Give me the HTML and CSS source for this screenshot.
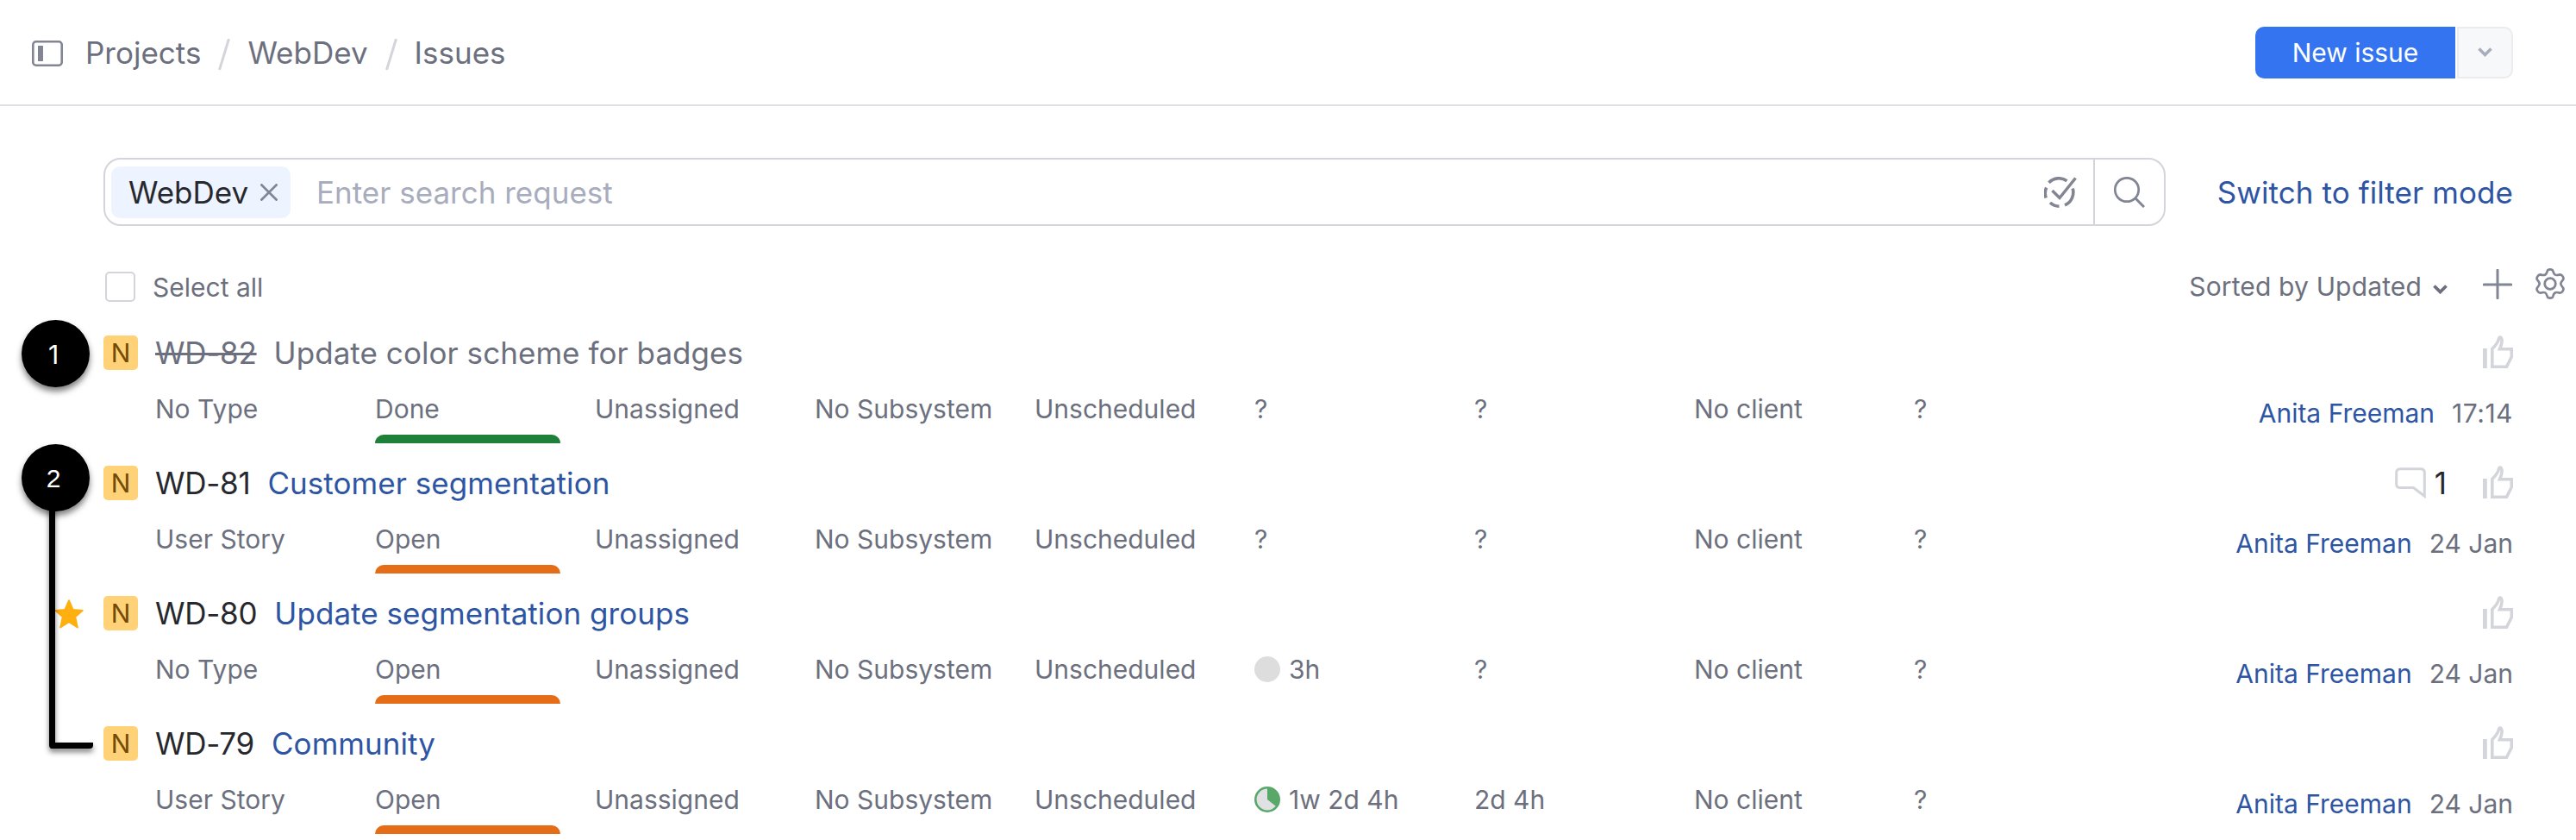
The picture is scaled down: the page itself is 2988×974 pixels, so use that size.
FILE: index.html
```html
<!DOCTYPE html>
<html lang="en">
<head>
    <meta charset="UTF-8">
    <meta name="viewport" content="width=device-width, initial-scale=1.0">
    <title>Issues</title>
    <link rel="stylesheet" href="styles.css">
</head>
<body>

    <!-- Shared icons -->
    <svg class="sprite">
        <symbol id="thumb" viewBox="0 0 35 38">
            <path d="M10.800 15.500v20.700h16.700l5.800-11.500v-9H19.500c2.500-5.500 3.500-10.500 1.500-13.200-.8-.9-1.800-.6-2.300.5-.8 4-3.400 8.200-7.900 12.500z" fill="none" stroke="currentColor" stroke-width="3.600"/>
            <path d="M0 15h4.800v23H0z" fill="currentColor"/>
        </symbol>
        <symbol id="slash" viewBox="0 0 14 36">
            <path d="M12.500 0L1.500 36" stroke="currentColor" stroke-width="3"/>
        </symbol>
    </svg>

    <header class="header">
        <svg class="sidebar-icon" viewBox="0 0 36 30">
            <rect x="1.300" y="1.300" width="33.400" height="27.400" rx="3.500" fill="none" stroke="currentColor" stroke-width="2.600"/>
            <path d="M7 6h6v18H7z" fill="currentColor"/>
        </svg>
        <nav class="crumbs">
            <a>Projects</a>
            <svg class="slash"><use href="#slash"/></svg>
            <a>WebDev</a>
            <svg class="slash"><use href="#slash"/></svg>
            <a>Issues</a>
        </nav>
        <button class="new-issue">New issue</button>
        <button class="new-more">
            <svg class="arrow" viewBox="0 0 17 11"><path d="M1.500 1.500l7 7 7-7" fill="none" stroke="currentColor" stroke-width="3.500"/></svg>
        </button>
    </header>

    <main>
        <div class="search-row">
            <div class="search">
                <span class="chip">WebDev
                    <svg class="close" viewBox="0 0 20 20"><path d="M.5.5l19 19M19.500.5l-19 19" stroke="currentColor" stroke-width="2.700"/></svg>
                </span>
                <span class="placeholder">Enter search request</span>
                <svg class="check-icon" viewBox="0 0 38 36">
                    <path d="M5.500 6.800A16 16 0 0 1 26.500 4.800M33.200 13.500A16 16 0 0 1 24 32.800M17.500 34.200A16 16 0 0 1 7 30M2.200 24.500A16 16 0 0 1 2.700 12.500" fill="none" stroke="currentColor" stroke-width="3.600"/>
                    <path d="M9.500 16l8.500 8.500L36.500 1.500" fill="none" stroke="currentColor" stroke-width="3.500"/>
                </svg>
                <span class="search-btn">
                    <svg viewBox="0 0 36 36"><circle cx="15" cy="15" r="13.700" fill="none" stroke="currentColor" stroke-width="2.700"/><path d="M24.500 24.500L35 35" stroke="currentColor" stroke-width="3"/></svg>
                </span>
            </div>
            <a class="filter-link">Switch to filter mode</a>
        </div>

        <div class="toolbar">
            <span class="checkbox"></span>
            <span class="select-all">Select all</span>
            <span class="sorted">Sorted by Updated</span>
            <svg class="arrow" viewBox="0 0 17 11"><path d="M1.500 1.500l7 7 7-7" fill="none" stroke="currentColor" stroke-width="3.800"/></svg>
            <svg class="plus" viewBox="0 0 34 35"><path d="M17 1.300v32.400M1.300 18h31.400" stroke="currentColor" stroke-width="3" stroke-linecap="round"/></svg>
            <svg class="gear" viewBox="0 0 36 36">
                <path d="M14.800 3.200Q15.300 1.400 18 1.400T21.200 3.200Q22.200 6.500 23.600 7.500T29.300 7.400Q31.300 7.200 32.700 9.600T32.900 13.300Q30.300 16.500 30.300 18T32.900 22.700Q34.100 24 32.700 26.400T29.300 28.600Q25.200 27.500 23.600 28.500T21.200 32.800Q20.700 34.600 18 34.600T14.800 32.800Q13.800 29.500 12.400 28.500T6.700 28.600Q4.700 28.800 3.300 26.400T3.100 22.700Q5.700 19.500 5.700 18T3.100 13.300Q1.900 12 3.300 9.600T6.700 7.400Q10.800 8.500 12.400 7.500T14.800 3.200Z" fill="none" stroke="currentColor" stroke-width="2.700" stroke-linejoin="round"/>
                <circle cx="18" cy="18" r="6.300" fill="none" stroke="currentColor" stroke-width="2.800"/>
            </svg>
        </div>

        <div class="issue resolved">
            <div class="summary">
                <span class="tag">N</span>
                <span class="issue-id">WD-82</span>
                <a class="title">Update color scheme for badges</a>
                <svg class="thumb"><use href="#thumb"/></svg>
            </div>
            <div class="fields">
                <span>No Type</span>
                <span class="state done">Done</span>
                <span>Unassigned</span>
                <span>No Subsystem</span>
                <span>Unscheduled</span>
                <span>?</span>
                <span>?</span>
                <span>No client</span>
                <span>?</span>
                <div class="updated"><a>Anita Freeman</a><time class="today">17:14</time></div>
            </div>
        </div>

        <div class="issue">
            <div class="summary">
                <span class="tag">N</span>
                <span class="issue-id">WD-81</span>
                <a class="title">Customer segmentation</a>
                <svg class="comment" viewBox="0 0 36 36"><path d="M6 1.700h24q4.300 0 4.300 4.300v27.300L21.500 23.500H6q-4.300 0-4.300-4.300V6q0-4.300 4.300-4.300z" fill="none" stroke="currentColor" stroke-width="3"/></svg>
                <span class="comment-count">1</span>
                <svg class="thumb"><use href="#thumb"/></svg>
            </div>
            <div class="fields">
                <span>User Story</span>
                <span class="state open">Open</span>
                <span>Unassigned</span>
                <span>No Subsystem</span>
                <span>Unscheduled</span>
                <span>?</span>
                <span>?</span>
                <span>No client</span>
                <span>?</span>
                <div class="updated"><a>Anita Freeman</a><time>24 Jan</time></div>
            </div>
        </div>

        <div class="issue">
            <div class="summary">
                <svg class="star" viewBox="0 0 34 34"><path d="M17 1.200l4.600 10.600 11.200 1-8.500 7.500 2.600 12.300L17 26.200 7.100 32.600l2.600-12.300-8.500-7.500 11.200-1z" fill="currentColor" stroke="currentColor" stroke-width="1.800" stroke-linejoin="round"/></svg>
                <span class="tag">N</span>
                <span class="issue-id">WD-80</span>
                <a class="title">Update segmentation groups</a>
                <svg class="thumb"><use href="#thumb"/></svg>
            </div>
            <div class="fields">
                <span>No Type</span>
                <span class="state open">Open</span>
                <span>Unassigned</span>
                <span>No Subsystem</span>
                <span>Unscheduled</span>
                <span class="period"><svg viewBox="0 0 30 30"><circle cx="15" cy="15" r="15" fill="#ddd"/></svg>3h</span>
                <span>?</span>
                <span>No client</span>
                <span>?</span>
                <div class="updated"><a>Anita Freeman</a><time>24 Jan</time></div>
            </div>
        </div>

        <div class="issue">
            <div class="summary">
                <span class="tag">N</span>
                <span class="issue-id">WD-79</span>
                <a class="title">Community</a>
                <svg class="thumb"><use href="#thumb"/></svg>
            </div>
            <div class="fields">
                <span>User Story</span>
                <span class="state open">Open</span>
                <span>Unassigned</span>
                <span>No Subsystem</span>
                <span>Unscheduled</span>
                <span class="period"><svg viewBox="0 0 30 30"><circle cx="15" cy="15" r="13.700" fill="#dfe1e5" stroke="#59a869" stroke-width="2.600"/><path d="M15 15V1.300A13.700 13.700 0 0 1 25.800 23.400z" fill="#59a869"/></svg>1w 2d 4h</span>
                <span>2d 4h</span>
                <span>No client</span>
                <span>?</span>
                <div class="updated"><a>Anita Freeman</a><time>24 Jan</time></div>
            </div>
        </div>
    </main>

    <!-- Callouts over the list -->
    <div class="callout-line"></div>
    <div class="callout callout-1">1</div>
    <div class="callout callout-2">2</div>

</body>
</html>
```

FILE: styles.css
```css
* {
    box-sizing: border-box;
}

body {
    position: relative;
    margin: 0;
    height: 974px;
    overflow: hidden;
    font-family: Inter, sans-serif;
    font-size: 30px;
    color: #6c707e;
    background: #fff;
}

svg {
    display: block;
    flex: none;
}

.sprite {
    display: none;
}

/* Header */
.header {
    display: flex;
    align-items: center;
    height: 123px;
    padding: 1px 73px 0 37px;
    border-bottom: 2px solid #dfe0e5;
}

.sidebar-icon {
    width: 36px;
    height: 30px;
    margin-top: 2px;
    color: #818594;
}

.crumbs {
    display: flex;
    align-items: center;
    flex: 1;
    font-size: 35px;
    line-height: 40px;
    gap: 20px;
    margin-left: 26px;
}

.slash {
    width: 14px;
    height: 36px;
    margin-top: 4px;
    color: #d3d5db;
}

button {
    height: 60px;
    padding: 0;
    font-family: inherit;
    font-size: 30px;
}

.new-issue {
    width: 232px;
    border: none;
    border-radius: 10px 0 0 10px;
    color: #fff;
    background: #3574f0;
}

.new-more {
    display: flex;
    align-items: center;
    justify-content: center;
    width: 65px;
    margin-left: 2px;
    padding-bottom: 2px;
    border: 2px solid #ebecf0;
    border-radius: 0 10px 10px 0;
    color: #a8adbd;
    background: #f7f8fa;
}

.arrow {
    width: 17px;
    height: 11px;
}

/* Search */
.search-row {
    display: flex;
    align-items: center;
    justify-content: space-between;
    margin: 60px 73px 0 120px;
    font-size: 35px;
}

.search {
    display: flex;
    align-items: center;
    width: 2392px;
    height: 79px;
    padding-left: 7px;
    border: 2px solid #d3d5db;
    border-radius: 20px;
    color: #818594;
}

.chip {
    display: flex;
    align-items: center;
    justify-content: space-between;
    width: 208px;
    height: 60px;
    padding: 0 15px 0 20px;
    border-radius: 10px;
    color: #27282e;
    background: #edf3ff;
}

.close {
    width: 20px;
    height: 20px;
    color: #818594;
}

.placeholder {
    flex: 1;
    margin-left: 30px;
    color: #a8adbd;
}

.check-icon {
    width: 38px;
    height: 36px;
    margin-right: 19px;
}

.search-btn {
    display: flex;
    align-items: center;
    width: 82px;
    height: 100%;
    padding-left: 22px;
    border-left: 2px solid #d3d5db;
}

.search-btn svg {
    width: 36px;
    height: 36px;
}

a {
    white-space: nowrap;
}

.filter-link,
.title,
.updated a {
    color: #2e55a3;
}

.filter-link {
    letter-spacing: 0.08px;
}

/* Toolbar */
.toolbar {
    display: flex;
    align-items: center;
    height: 40px;
    margin: 50px 12px 37px 122px;
}

.checkbox {
    width: 35px;
    height: 35px;
    margin-right: 20px;
    border: 2px solid #d3d5db;
    border-radius: 5px;
}

.select-all {
    flex: 1;
    margin-top: 2px;
}

.sorted {
    margin-right: 13px;
    letter-spacing: 0.15px;
}

.toolbar .arrow {
    margin-top: 7px;
}

.plus {
    width: 34px;
    height: 35px;
    margin: -5px 26px 0 41px;
    color: #818594;
}

.gear {
    width: 36px;
    height: 36px;
    margin-top: -7px;
    color: #818594;
}

/* Issue list */
.issue {
    height: 151px;
    margin: 0 73px 0 120px;
}

.summary {
    display: flex;
    align-items: center;
    height: 40px;
    font-size: 35px;
    line-height: 40px;
}

.tag {
    width: 40px;
    height: 40px;
    margin-right: 20px;
    border-radius: 5px;
    font-size: 30px;
    text-align: center;
    color: #734b07;
    background: #ffd277;
}

.issue-id {
    margin-right: 20px;
    color: #27282e;
    letter-spacing: -0.25px;
}

.title {
    flex: 1;
    letter-spacing: 0.05px;
}

.resolved .issue-id,
.resolved .title {
    color: #6c707e;
}

.resolved .issue-id {
    text-decoration: line-through;
}

.star {
    width: 34px;
    height: 34px;
    margin: 2px 23px 0 -57px;
    color: #ffaf0f;
}

.thumb {
    width: 35px;
    height: 38px;
    margin-top: -2px;
    color: #d3d5db;
}

.comment {
    width: 36px;
    height: 36px;
    margin-right: 10px;
    color: #d3d5db;
}

.comment-count {
    margin-right: 42px;
    color: #27282e;
}

.fields {
    display: grid;
    grid-template-columns: repeat(9, 255px) 1fr;
    margin: 25px 0 0 60px;
    line-height: 40px;
    white-space: nowrap;
}

.state::after {
    content: "";
    display: block;
    width: 215px;
    height: 10px;
    margin-top: 10px;
    border-radius: 10px 10px 0 0;
}

.done::after {
    background: #1f8039;
}

.open::after {
    background: #e66d17;
}

.period {
    display: flex;
    align-items: center;
    gap: 10px;
    height: 40px;
}

.period svg {
    width: 30px;
    height: 30px;
}

.updated {
    display: flex;
    justify-content: flex-end;
    gap: 20px;
    line-height: 50px;
}

.today {
    letter-spacing: 0.5px;
}

/* Callouts */
.callout {
    position: absolute;
    left: 25px;
    width: 79px;
    height: 78px;
    padding-right: 5px;
    border-radius: 50%;
    font: 30px/80px "Liberation Sans", Arial, sans-serif;
    text-align: center;
    color: #fff;
    background: #000;
    box-shadow: 0 5px 7px rgba(0, 0, 0, 0.5);
}

.callout-1 {
    top: 371px;
    font-family: Inter, sans-serif;
}

.callout-2 {
    top: 515px;
}

.callout-line {
    position: absolute;
    left: 57px;
    top: 570px;
    width: 51px;
    height: 298px;
    border: solid #000;
    border-width: 0 0 7px 7px;
    border-radius: 0 0 4px 4px;
    filter: drop-shadow(0 4px 3px rgba(0, 0, 0, 0.5));
}
```
